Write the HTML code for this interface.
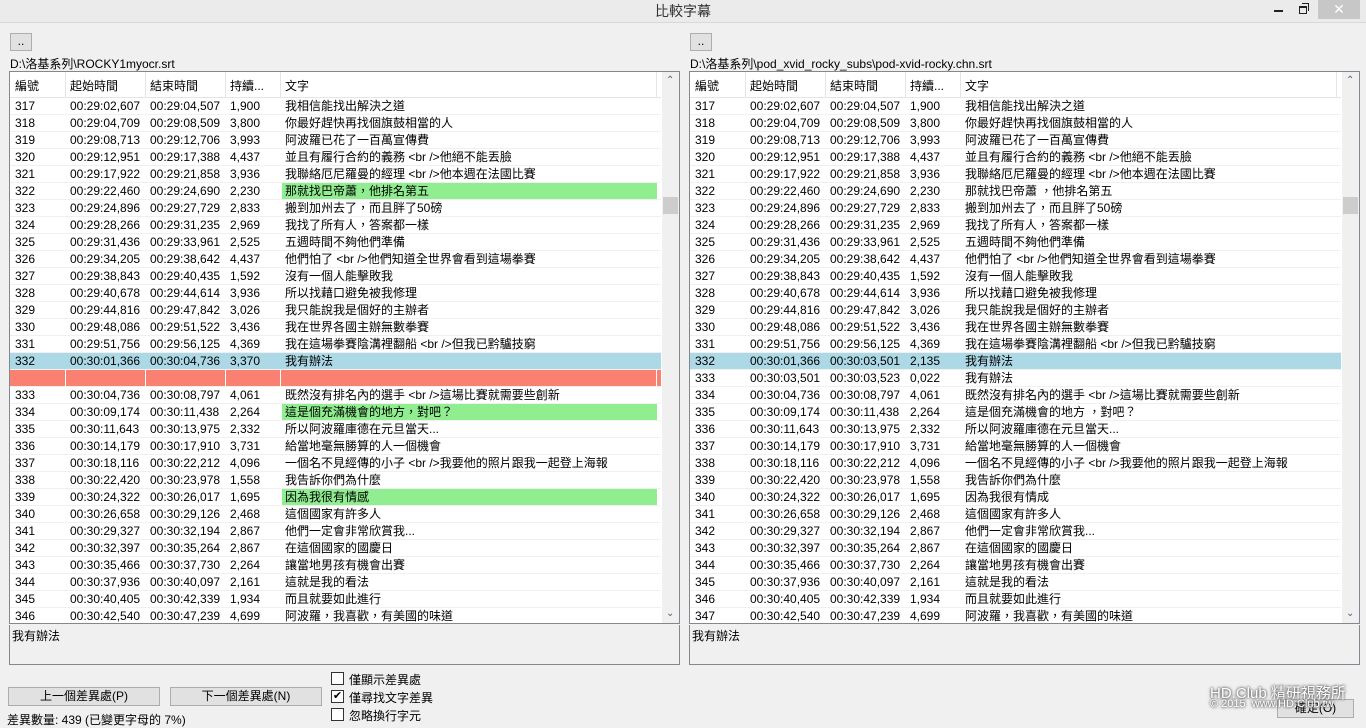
<!DOCTYPE html>
<html><head><meta charset="utf-8"><style>
*{box-sizing:border-box;margin:0;padding:0}
body{width:1366px;height:728px;background:#f0f0f0;font-family:"Liberation Sans","Noto Sans CJK TC",sans-serif;font-size:12px;color:#000;position:relative;overflow:hidden}
.a{position:absolute;white-space:nowrap}
.title{left:0;top:0;width:1366px;height:23px;background:#ebebeb;border-bottom:1px solid #d9d9d9;text-align:center;line-height:22px;font-size:14px;color:#333}
.btn{position:absolute;background:#e1e1e1;border:1px solid #adadad;text-align:center;font-size:12px}
.list{position:absolute;top:71px;width:671px;height:553px;border:1px solid #828790;background:#fff;overflow:hidden}
.hdr{position:absolute;left:0;top:0;width:651px;height:26px;background:#fff;border-bottom:1px solid #e5e5e5}
.hdr span{position:absolute;top:5px}
.hdr i{position:absolute;top:0;width:1px;height:26px;background:#e5e5e5}
.r{position:absolute;left:0;width:651px;height:17px;border-bottom:1px solid #f0f0f0;line-height:16px}
.r span{position:absolute;top:0}
.r span:nth-of-type(1){left:5px}.r span:nth-of-type(2){left:60px}.r span:nth-of-type(3){left:140px}.r span:nth-of-type(4){left:220px}.r span:nth-of-type(5){left:275px}
.g{position:absolute;left:272px;top:0;width:375px;height:16px;background:#90ee90}
.blue{background:#add8e6}
.red{background:#fa8072}
.red b{position:absolute;top:0;width:1px;height:17px;background:#fff}
.sb{position:absolute;right:0;top:0;width:17px;height:551px;background:#f0f0f0}
.th{position:absolute;left:1px;width:15px;height:17px;background:#cdcdcd}
.memo{position:absolute;top:625px;width:671px;height:40px;border:1px solid #828790;border-top:none;background:#f0f0f0;padding:2px}
.cb{position:absolute;width:13px;height:13px;border:1px solid #333;background:#fff}
</style></head><body>
<div class="a title">比較字幕</div>
<div class="a" style="left:1274px;top:10px;width:9px;height:2px;background:#222"></div>
<div class="a" style="left:1299px;top:6px;width:8px;height:8px;border:1px solid #222;border-top-width:2px"></div>
<div class="a" style="left:1302px;top:3px;width:7px;height:8px;border-top:1px solid #222;border-right:1px solid #222"></div>
<div class="a" style="left:1318px;top:0;width:42px;height:19px;background:#c7c7c7;color:#fff;text-align:center;font-size:14px;line-height:19px">✕</div>

<div class="btn" style="left:10px;top:33px;width:22px;height:18px;line-height:14px">..</div>
<div class="a" style="left:10px;top:55px">D:\洛基系列\ROCKY1myocr.srt</div>
<div class="btn" style="left:690px;top:33px;width:22px;height:18px;line-height:14px">..</div>
<div class="a" style="left:690px;top:55px">D:\洛基系列\pod_xvid_rocky_subs\pod-xvid-rocky.chn.srt</div>

<div class="list" style="left:9px">
<div class="hdr"><span style="left:5px">編號</span><i style="left:55px"></i><span style="left:60px">起始時間</span><i style="left:135px"></i><span style="left:140px">結束時間</span><i style="left:215px"></i><span style="left:220px">持續...</span><i style="left:270px"></i><span style="left:275px">文字</span><i style="left:646px"></i></div>
<div class="r" style="top:26px"><span>317</span><span>00:29:02,607</span><span>00:29:04,507</span><span>1,900</span><span>我相信能找出解決之道</span></div>
<div class="r" style="top:43px"><span>318</span><span>00:29:04,709</span><span>00:29:08,509</span><span>3,800</span><span>你最好趕快再找個旗鼓相當的人</span></div>
<div class="r" style="top:60px"><span>319</span><span>00:29:08,713</span><span>00:29:12,706</span><span>3,993</span><span>阿波羅已花了一百萬宣傳費</span></div>
<div class="r" style="top:77px"><span>320</span><span>00:29:12,951</span><span>00:29:17,388</span><span>4,437</span><span>並且有履行合約的義務 &lt;br /&gt;他絕不能丟臉</span></div>
<div class="r" style="top:94px"><span>321</span><span>00:29:17,922</span><span>00:29:21,858</span><span>3,936</span><span>我聯絡厄尼羅曼的經理 &lt;br /&gt;他本週在法國比賽</span></div>
<div class="r" style="top:111px"><div class="g"></div><span>322</span><span>00:29:22,460</span><span>00:29:24,690</span><span>2,230</span><span>那就找巴帝蕭，他排名第五</span></div>
<div class="r" style="top:128px"><span>323</span><span>00:29:24,896</span><span>00:29:27,729</span><span>2,833</span><span>搬到加州去了，而且胖了50磅</span></div>
<div class="r" style="top:145px"><span>324</span><span>00:29:28,266</span><span>00:29:31,235</span><span>2,969</span><span>我找了所有人，答案都一樣</span></div>
<div class="r" style="top:162px"><span>325</span><span>00:29:31,436</span><span>00:29:33,961</span><span>2,525</span><span>五週時間不夠他們準備</span></div>
<div class="r" style="top:179px"><span>326</span><span>00:29:34,205</span><span>00:29:38,642</span><span>4,437</span><span>他們怕了 &lt;br /&gt;他們知道全世界會看到這場拳賽</span></div>
<div class="r" style="top:196px"><span>327</span><span>00:29:38,843</span><span>00:29:40,435</span><span>1,592</span><span>沒有一個人能擊敗我</span></div>
<div class="r" style="top:213px"><span>328</span><span>00:29:40,678</span><span>00:29:44,614</span><span>3,936</span><span>所以找藉口避免被我修理</span></div>
<div class="r" style="top:230px"><span>329</span><span>00:29:44,816</span><span>00:29:47,842</span><span>3,026</span><span>我只能說我是個好的主辦者</span></div>
<div class="r" style="top:247px"><span>330</span><span>00:29:48,086</span><span>00:29:51,522</span><span>3,436</span><span>我在世界各國主辦無數拳賽</span></div>
<div class="r" style="top:264px"><span>331</span><span>00:29:51,756</span><span>00:29:56,125</span><span>4,369</span><span>我在這場拳賽陰溝裡翻船 &lt;br /&gt;但我已黔驢技窮</span></div>
<div class="r blue" style="top:281px"><span>332</span><span>00:30:01,366</span><span>00:30:04,736</span><span>3,370</span><span>我有辦法</span></div>
<div class="r red" style="top:298px"><b style="left:55px"></b><b style="left:135px"></b><b style="left:215px"></b><b style="left:270px"></b><b style="left:646px"></b></div>
<div class="r" style="top:315px"><span>333</span><span>00:30:04,736</span><span>00:30:08,797</span><span>4,061</span><span>既然沒有排名內的選手 &lt;br /&gt;這場比賽就需要些創新</span></div>
<div class="r" style="top:332px"><div class="g"></div><span>334</span><span>00:30:09,174</span><span>00:30:11,438</span><span>2,264</span><span>這是個充滿機會的地方，對吧？</span></div>
<div class="r" style="top:349px"><span>335</span><span>00:30:11,643</span><span>00:30:13,975</span><span>2,332</span><span>所以阿波羅庫德在元旦當天...</span></div>
<div class="r" style="top:366px"><span>336</span><span>00:30:14,179</span><span>00:30:17,910</span><span>3,731</span><span>給當地毫無勝算的人一個機會</span></div>
<div class="r" style="top:383px"><span>337</span><span>00:30:18,116</span><span>00:30:22,212</span><span>4,096</span><span>一個名不見經傳的小子 &lt;br /&gt;我要他的照片跟我一起登上海報</span></div>
<div class="r" style="top:400px"><span>338</span><span>00:30:22,420</span><span>00:30:23,978</span><span>1,558</span><span>我告訴你們為什麼</span></div>
<div class="r" style="top:417px"><div class="g"></div><span>339</span><span>00:30:24,322</span><span>00:30:26,017</span><span>1,695</span><span>因為我很有情感</span></div>
<div class="r" style="top:434px"><span>340</span><span>00:30:26,658</span><span>00:30:29,126</span><span>2,468</span><span>這個國家有許多人</span></div>
<div class="r" style="top:451px"><span>341</span><span>00:30:29,327</span><span>00:30:32,194</span><span>2,867</span><span>他們一定會非常欣賞我...</span></div>
<div class="r" style="top:468px"><span>342</span><span>00:30:32,397</span><span>00:30:35,264</span><span>2,867</span><span>在這個國家的國慶日</span></div>
<div class="r" style="top:485px"><span>343</span><span>00:30:35,466</span><span>00:30:37,730</span><span>2,264</span><span>讓當地男孩有機會出賽</span></div>
<div class="r" style="top:502px"><span>344</span><span>00:30:37,936</span><span>00:30:40,097</span><span>2,161</span><span>這就是我的看法</span></div>
<div class="r" style="top:519px"><span>345</span><span>00:30:40,405</span><span>00:30:42,339</span><span>1,934</span><span>而且就要如此進行</span></div>
<div class="r" style="top:536px"><span>346</span><span>00:30:42,540</span><span>00:30:47,239</span><span>4,699</span><span>阿波羅，我喜歡，有美國的味道</span></div>
<div class="sb"><div class="a" style="left:4px;top:3px;color:#606060;font-size:10px">⌃</div><div class="th" style="top:125px"></div><div class="a" style="left:4px;top:536px;color:#606060;font-size:10px">⌄</div></div>
</div>

<div class="list" style="left:689px">
<div class="hdr"><span style="left:5px">編號</span><i style="left:55px"></i><span style="left:60px">起始時間</span><i style="left:135px"></i><span style="left:140px">結束時間</span><i style="left:215px"></i><span style="left:220px">持續...</span><i style="left:270px"></i><span style="left:275px">文字</span><i style="left:646px"></i></div>
<div class="r" style="top:26px"><span>317</span><span>00:29:02,607</span><span>00:29:04,507</span><span>1,900</span><span>我相信能找出解決之道</span></div>
<div class="r" style="top:43px"><span>318</span><span>00:29:04,709</span><span>00:29:08,509</span><span>3,800</span><span>你最好趕快再找個旗鼓相當的人</span></div>
<div class="r" style="top:60px"><span>319</span><span>00:29:08,713</span><span>00:29:12,706</span><span>3,993</span><span>阿波羅已花了一百萬宣傳費</span></div>
<div class="r" style="top:77px"><span>320</span><span>00:29:12,951</span><span>00:29:17,388</span><span>4,437</span><span>並且有履行合約的義務 &lt;br /&gt;他絕不能丟臉</span></div>
<div class="r" style="top:94px"><span>321</span><span>00:29:17,922</span><span>00:29:21,858</span><span>3,936</span><span>我聯絡厄尼羅曼的經理 &lt;br /&gt;他本週在法國比賽</span></div>
<div class="r" style="top:111px"><span>322</span><span>00:29:22,460</span><span>00:29:24,690</span><span>2,230</span><span>那就找巴帝蕭 ，他排名第五</span></div>
<div class="r" style="top:128px"><span>323</span><span>00:29:24,896</span><span>00:29:27,729</span><span>2,833</span><span>搬到加州去了，而且胖了50磅</span></div>
<div class="r" style="top:145px"><span>324</span><span>00:29:28,266</span><span>00:29:31,235</span><span>2,969</span><span>我找了所有人，答案都一樣</span></div>
<div class="r" style="top:162px"><span>325</span><span>00:29:31,436</span><span>00:29:33,961</span><span>2,525</span><span>五週時間不夠他們準備</span></div>
<div class="r" style="top:179px"><span>326</span><span>00:29:34,205</span><span>00:29:38,642</span><span>4,437</span><span>他們怕了 &lt;br /&gt;他們知道全世界會看到這場拳賽</span></div>
<div class="r" style="top:196px"><span>327</span><span>00:29:38,843</span><span>00:29:40,435</span><span>1,592</span><span>沒有一個人能擊敗我</span></div>
<div class="r" style="top:213px"><span>328</span><span>00:29:40,678</span><span>00:29:44,614</span><span>3,936</span><span>所以找藉口避免被我修理</span></div>
<div class="r" style="top:230px"><span>329</span><span>00:29:44,816</span><span>00:29:47,842</span><span>3,026</span><span>我只能說我是個好的主辦者</span></div>
<div class="r" style="top:247px"><span>330</span><span>00:29:48,086</span><span>00:29:51,522</span><span>3,436</span><span>我在世界各國主辦無數拳賽</span></div>
<div class="r" style="top:264px"><span>331</span><span>00:29:51,756</span><span>00:29:56,125</span><span>4,369</span><span>我在這場拳賽陰溝裡翻船 &lt;br /&gt;但我已黔驢技窮</span></div>
<div class="r blue" style="top:281px"><span>332</span><span>00:30:01,366</span><span>00:30:03,501</span><span>2,135</span><span>我有辦法</span></div>
<div class="r" style="top:298px"><span>333</span><span>00:30:03,501</span><span>00:30:03,523</span><span>0,022</span><span>我有辦法</span></div>
<div class="r" style="top:315px"><span>334</span><span>00:30:04,736</span><span>00:30:08,797</span><span>4,061</span><span>既然沒有排名內的選手 &lt;br /&gt;這場比賽就需要些創新</span></div>
<div class="r" style="top:332px"><span>335</span><span>00:30:09,174</span><span>00:30:11,438</span><span>2,264</span><span>這是個充滿機會的地方 ，對吧？</span></div>
<div class="r" style="top:349px"><span>336</span><span>00:30:11,643</span><span>00:30:13,975</span><span>2,332</span><span>所以阿波羅庫德在元旦當天...</span></div>
<div class="r" style="top:366px"><span>337</span><span>00:30:14,179</span><span>00:30:17,910</span><span>3,731</span><span>給當地毫無勝算的人一個機會</span></div>
<div class="r" style="top:383px"><span>338</span><span>00:30:18,116</span><span>00:30:22,212</span><span>4,096</span><span>一個名不見經傳的小子 &lt;br /&gt;我要他的照片跟我一起登上海報</span></div>
<div class="r" style="top:400px"><span>339</span><span>00:30:22,420</span><span>00:30:23,978</span><span>1,558</span><span>我告訴你們為什麼</span></div>
<div class="r" style="top:417px"><span>340</span><span>00:30:24,322</span><span>00:30:26,017</span><span>1,695</span><span>因為我很有情成</span></div>
<div class="r" style="top:434px"><span>341</span><span>00:30:26,658</span><span>00:30:29,126</span><span>2,468</span><span>這個國家有許多人</span></div>
<div class="r" style="top:451px"><span>342</span><span>00:30:29,327</span><span>00:30:32,194</span><span>2,867</span><span>他們一定會非常欣賞我...</span></div>
<div class="r" style="top:468px"><span>343</span><span>00:30:32,397</span><span>00:30:35,264</span><span>2,867</span><span>在這個國家的國慶日</span></div>
<div class="r" style="top:485px"><span>344</span><span>00:30:35,466</span><span>00:30:37,730</span><span>2,264</span><span>讓當地男孩有機會出賽</span></div>
<div class="r" style="top:502px"><span>345</span><span>00:30:37,936</span><span>00:30:40,097</span><span>2,161</span><span>這就是我的看法</span></div>
<div class="r" style="top:519px"><span>346</span><span>00:30:40,405</span><span>00:30:42,339</span><span>1,934</span><span>而且就要如此進行</span></div>
<div class="r" style="top:536px"><span>347</span><span>00:30:42,540</span><span>00:30:47,239</span><span>4,699</span><span>阿波羅，我喜歡，有美國的味道</span></div>
<div class="sb"><div class="a" style="left:4px;top:3px;color:#606060;font-size:10px">⌃</div><div class="th" style="top:125px"></div><div class="a" style="left:4px;top:536px;color:#606060;font-size:10px">⌄</div></div>
</div>

<div class="memo" style="left:9px">我有辦法</div>
<div class="memo" style="left:689px">我有辦法</div>

<div class="btn" style="left:8px;top:687px;width:152px;height:19px;line-height:17px">上一個差異處(P)</div>
<div class="btn" style="left:170px;top:687px;width:152px;height:19px;line-height:17px">下一個差異處(N)</div>
<div class="a" style="left:7px;top:711px">差異數量: 439 (已變更字母的 7%)</div>
<div class="cb" style="left:331px;top:672px"></div><div class="a" style="left:349px;top:671px">僅顯示差異處</div>
<div class="cb" style="left:331px;top:690px;font-size:11px;line-height:11px;text-align:center">✔</div><div class="a" style="left:349px;top:689px">僅尋找文字差異</div>
<div class="cb" style="left:331px;top:708px"></div><div class="a" style="left:349px;top:707px">忽略換行字元</div>

<div class="btn" style="left:1277px;top:699px;width:77px;height:19px;line-height:17px">確定(O)</div>
<div class="a" style="left:1210px;top:682px;color:#fff;font-size:15px;text-shadow:0 0 3px #555,0 0 2px #555">HD.Club 精研視務所</div>
<div class="a" style="left:1210px;top:698px;color:#fff;font-size:11px;text-shadow:0 0 3px #555,0 0 2px #555">© 2015&nbsp; www.HD.Club.tw</div>
</body></html>
